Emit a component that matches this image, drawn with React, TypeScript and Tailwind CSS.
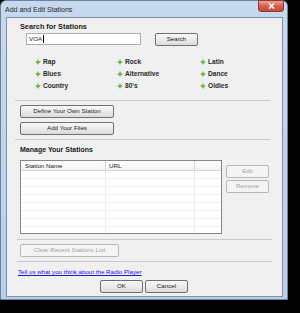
import type { ReactNode } from "react"

const font = "font-['Liberation_Sans',Arial,sans-serif]"

function WinButton({
  children,
  disabled,
  className = "",
}: {
  children: ReactNode
  disabled?: boolean
  className?: string
}) {
  return (
    <div
      className={
        "flex items-center justify-center rounded-[2px] border text-[6.2px] leading-none " +
        (disabled
          ? "border-[#b5b9bc] bg-[#f4f4f4] text-[#a3a3a3] "
          : "border-[#707070] bg-linear-to-b from-[#f7f7f7] via-[#ececec] to-[#dadada] text-[#1a1a1a] ") +
        className
      }
    >
      {children}
    </div>
  )
}

function GenreIcon() {
  return (
    <svg width="6" height="6" viewBox="0 0 6 6" className="shrink-0">
      <path d="M3 0L4 2L6 3L4 4L3 6L2 4L0 3L2 2z" fill="#62ad44" />
      <path d="M3 0.6L3.6 2.4L3 3L2.4 2.4z" fill="#a6d98a" />
    </svg>
  )
}

function Genre({ name }: { name: string }) {
  return (
    <div className="flex h-[12px] items-center gap-[2px]">
      <GenreIcon />
      <span className="text-[6.6px] font-bold leading-none text-[#2a2a2a]">{name}</span>
    </div>
  )
}

function Separator({ className = "" }: { className?: string }) {
  return <div className={"h-[2px] border-t border-[#c9c9c9] border-b-white " + className} />
}

export default function App() {
  const rows = Array.from({ length: 8 })

  return (
    <div className={"relative h-[313px] w-[300px] overflow-hidden bg-black " + font}>
      {/* window frame */}
      <div className="flex h-[300px] w-[288px] flex-col rounded-t-[6px] border border-[#6f829b] bg-linear-to-b from-[#c6d9ef] to-[#b9cfe9]">
        {/* title bar */}
        <div className="relative flex h-[16px] items-center pl-[4px]">
          <span className="text-[7px] leading-none text-[#1e1e1e]">Add and Edit Stations</span>
          <div className="absolute right-[3px] -top-px flex h-[12px] w-[26px] items-center justify-center rounded-b-[3px] border border-[#8a3a30] bg-linear-to-b from-[#eaa595] via-[#d4604e] to-[#c84a38]">
            <svg width="7" height="6" viewBox="0 0 7 6">
              <path d="M1 0.5l5 5M6 0.5l-5 5" stroke="#fff" strokeWidth="1.6" />
            </svg>
          </div>
        </div>

        {/* client area */}
        <div className="ml-[5px] mr-[4px] flex h-[280px] flex-col border border-[#7f91a8] bg-[#f0f0f0] text-[#1a1a1a]">
          <div className="ml-[13px] mt-[4px] h-[10px] text-[7.3px] font-bold leading-[10px]">
            Search for Stations
          </div>

          <div className="ml-[19px] mt-[1px] flex items-start gap-[14px]">
            <div className="flex h-[12px] w-[115px] items-center border border-[#abadb3] bg-white pl-[2px] text-[6.2px] leading-none">
              VOA
              <span className="ml-[1px] h-[8px] w-px bg-black" />
            </div>
            <WinButton className="h-[13px] w-[43px]">Search</WinButton>
          </div>

          <div className="ml-[28px] mt-[10px] grid grid-cols-[82px_83px_60px]">
            <Genre name="Rap" />
            <Genre name="Rock" />
            <Genre name="Latin" />
            <Genre name="Blues" />
            <Genre name="Alternative" />
            <Genre name="Dance" />
            <Genre name="Country" />
            <Genre name="80's" />
            <Genre name="Oldies" />
          </div>

          <Separator className="ml-[8px] mt-[8px] w-[255px]" />

          <WinButton className="ml-[13px] mt-[3px] h-[13px] w-[94px]">Define Your Own Station</WinButton>
          <WinButton className="ml-[13px] mt-[4px] h-[13px] w-[94px]">Add Your Files</WinButton>

          <Separator className="ml-[8px] mt-[4px] w-[255px]" />

          <div className="ml-[13px] mt-[4px] h-[10px] text-[7px] font-bold leading-[10px]">
            Manage Your Stations
          </div>

          <div className="ml-[13px] mt-[5px] flex items-start gap-[4px]">
            {/* list view */}
            <div className="flex h-[74px] w-[202px] flex-col border border-[#828790] bg-white">
              <div className="flex h-[10px] shrink-0 border-b border-[#d5d5d5] bg-linear-to-b from-white to-[#f3f3f3] text-[6.2px] leading-[9px]">
                <div className="w-[85px] border-r border-[#d5d5d5] pl-[4px]">Station Name</div>
                <div className="w-[89px] border-r border-[#d5d5d5] pl-[3px]">URL</div>
                <div className="flex-1" />
              </div>
              <div className="flex flex-1 flex-col overflow-hidden">
                {rows.map((_, i) => (
                  <div key={i} className="flex h-[8px] shrink-0 border-b border-[#f0f0f0]">
                    <div className="w-[85px] border-r border-[#ececec]" />
                    <div className="w-[89px] border-r border-[#ececec]" />
                    <div className="flex-1" />
                  </div>
                ))}
              </div>
            </div>

            <div className="mt-[5px] flex flex-col gap-[2px]">
              <WinButton disabled className="h-[13px] w-[43px]">Edit</WinButton>
              <WinButton disabled className="h-[13px] w-[43px]">Remove</WinButton>
            </div>
          </div>

          <Separator className="ml-[10px] mt-[5px] w-[255px]" />

          <WinButton disabled className="ml-[13px] mt-[3px] h-[13px] w-[99px]">
            Clear Recent Stations List
          </WinButton>

          <Separator className="ml-[10px] mt-[4px] w-[255px]" />

          <div className="ml-[11px] mt-[4px] h-[9px] text-[6.2px] leading-[9px] text-[#1515e6] underline">
            Tell us what you think about the Radio Player
          </div>

          <div className="ml-[93px] mt-[4px] flex gap-[2px]">
            <WinButton className="h-[13px] w-[43px]">OK</WinButton>
            <WinButton className="h-[13px] w-[43px]">Cancel</WinButton>
          </div>
        </div>
      </div>
    </div>
  )
}
